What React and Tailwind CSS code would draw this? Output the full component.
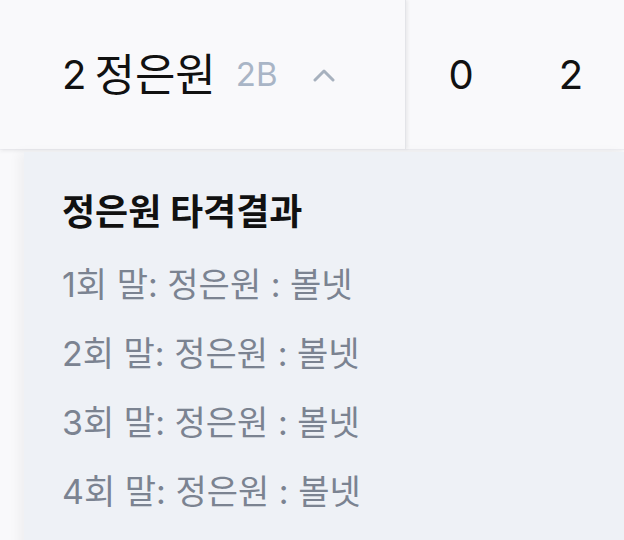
import React from 'react';

const FONT = "font-['Inter','Noto_Sans_CJK_KR',sans-serif]";

const atBats = [
  { inning: 1, name: '정은원', result: '볼넷' },
  { inning: 2, name: '정은원', result: '볼넷' },
  { inning: 3, name: '정은원', result: '볼넷' },
  { inning: 4, name: '정은원', result: '볼넷' },
];

function ChevronUp() {
  return (
    <svg width="24" height="14" viewBox="0 0 24 14" fill="none" className="text-[#a7b1be]">
      <path d="M3 12 L12 3 L21 12" stroke="currentColor" strokeWidth="3" strokeLinecap="round" strokeLinejoin="round" />
    </svg>
  );
}

export default function App() {
  return (
    <div className={`w-full h-[540px] overflow-hidden bg-[#f9f9fb] ${FONT}`}>
      {/* player row */}
      <div className="flex h-[150px] border-b border-[#ececf0] shadow-[0_2px_3px_rgba(0,0,0,0.04)]">
        <div className="relative z-10 w-[406px] shrink-0 flex items-center pl-[62px] border-r border-[#e3e4e8] shadow-[2px_0_3px_rgba(0,0,0,0.06)]">
          <span className="text-[40px] text-[#111] leading-none">2</span>
          <span className="ml-[8px] text-[44px] text-[#111] leading-none">정은원</span>
          <span className="ml-[20px] text-[33px] text-[#a9b5c6] leading-none">2B</span>
          <span className="ml-[34px] flex items-center">
            <ChevronUp />
          </span>
        </div>
        <div className="flex items-center">
          <span className="w-[110px] text-center text-[40px] text-[#111] leading-none">0</span>
          <span className="w-[110px] text-center text-[40px] text-[#111] leading-none">2</span>
        </div>
      </div>

      {/* at-bat results */}
      <div className="ml-[24px] mt-[2px] h-full bg-[#eef1f6] pt-[37px] pl-[38px] shadow-[-6px_0_10px_rgba(0,0,0,0.04)]">
        <h2 className="text-[36px] font-bold text-[#111] leading-[46px] mb-[15px]">정은원 타격결과</h2>
        {atBats.map(ab => (
          <p key={ab.inning} className="text-[34px] text-[#7b8391] leading-[69px]">
            {ab.inning}회 말: {ab.name} : {ab.result}
          </p>
        ))}
      </div>
    </div>
  );
}
